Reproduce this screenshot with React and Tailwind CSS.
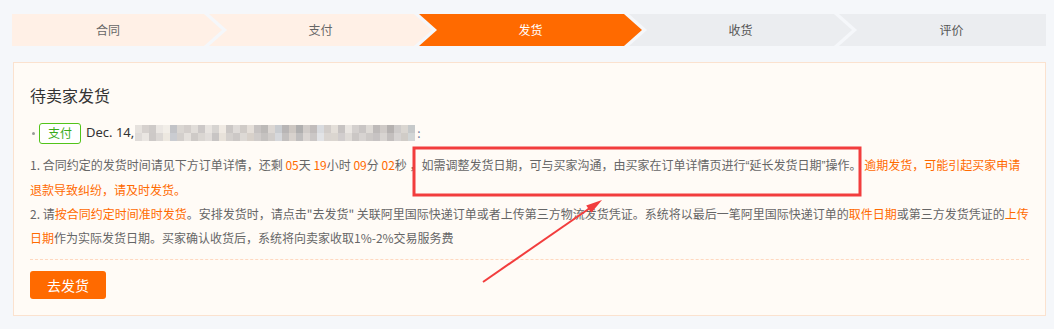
import React from "react";

const mosaicTop = [
  "bg-[#e4e0dc]","bg-[#d2cdca]","bg-[#c9c5c4]","bg-[#e9e5e1]","bg-[#f1ede7]","bg-[#bcbec3]","bg-[#d6d2cf]","bg-[#cfcac7]",
  "bg-[#dedad6]","bg-[#c7c3c2]","bg-[#e6e2de]","bg-[#d3d0ce]","bg-[#efe9e1]","bg-[#c6c2c0]","bg-[#dcd8d5]","bg-[#cbc6c3]",
  "bg-[#e3ddd6]","bg-[#c2bebd]","bg-[#b5b2b1]","bg-[#d9d4d0]","bg-[#c4c7cc]","bg-[#b1aeae]","bg-[#c8c2bd]","bg-[#a8a7a8]",
  "bg-[#cdc8c5]","bg-[#bbb6b5]","bg-[#d5d8dd]","bg-[#cec9c6]","bg-[#e2dcd6]","bg-[#c1bdbd]","bg-[#e8e4e0]","bg-[#d0ccca]",
  "bg-[#c4c0bf]","bg-[#dbd7d3]","bg-[#b7b3b3]","bg-[#cac5c2]","bg-[#ada9a9]","bg-[#c9c6c6]","bg-[#d6d2ce]","bg-[#c0c4c6]",
];
const mosaicBottom = [
  "bg-[#dcd8d5]","bg-[#e8e4e0]","bg-[#c8c4c3]","bg-[#d9d5d2]","bg-[#ece6de]","bg-[#c5c8cd]","bg-[#cfcbc8]","bg-[#e2deda]",
  "bg-[#c9c5c3]","bg-[#d6d2cf]","bg-[#dedad7]","bg-[#c3c0bf]","bg-[#e6e0d8]","bg-[#d0ccc9]","bg-[#c7c3c1]","bg-[#dad6d2]",
  "bg-[#d4cdc6]","bg-[#cbc7c6]","bg-[#bfbcbb]","bg-[#cdc9c6]","bg-[#d2d5da]","bg-[#bdbaba]","bg-[#d4cec9]","bg-[#bab8b9]",
  "bg-[#d8d3d0]","bg-[#c6c2c1]","bg-[#dfe1e5]","bg-[#d6d1ce]","bg-[#d8d2cc]","bg-[#cdc9c9]","bg-[#dcd8d4]","bg-[#c6c2c0]",
  "bg-[#d3cfcd]","bg-[#c8c4c2]","bg-[#c2bebe]","bg-[#d4d0cd]","bg-[#bdb9b9]","bg-[#d2cfcf]","bg-[#cbc7c3]","bg-[#ced2d3]",
];

function O({ children }) {
  return <span className="text-[#ff6a00]">{children}</span>;
}

function Q({ children }) {
  return <span style={{ fontFamily: '"Liberation Sans", sans-serif' }}>{children}</span>;
}

export default function App() {
  return (
    <div
      className="relative w-[1054px] h-[329px] bg-[#f5f7fa] pt-[14px] px-[12px] overflow-hidden"
      style={{ fontFamily: '"Noto Sans CJK SC", "Noto Sans", sans-serif' }}
    >
      {/* Steps */}
      <div className="flex h-[32px] w-[1034px] overflow-hidden text-[12px]">
        <div className="w-[210px] shrink-0 flex items-center justify-center pr-[18px] bg-[#fff0e6] text-[#666] [clip-path:polygon(0_0,calc(100%_-_18px)_0,100%_50%,calc(100%_-_18px)_100%,0_100%)]">
          合同
        </div>
        <div className="w-[223px] shrink-0 ml-[-13px] flex items-center justify-center px-[18px] bg-[#fff0e6] text-[#666] [clip-path:polygon(0_0,calc(100%_-_18px)_0,100%_50%,calc(100%_-_18px)_100%,0_100%,18px_50%)]">
          支付
        </div>
        <div className="w-[223px] shrink-0 ml-[-13px] flex items-center justify-center px-[18px] bg-[#ff6a00] text-white [clip-path:polygon(0_0,calc(100%_-_18px)_0,100%_50%,calc(100%_-_18px)_100%,0_100%,18px_50%)]">
          发货
        </div>
        <div className="w-[223px] shrink-0 ml-[-13px] flex items-center justify-center px-[18px] bg-[#ebedf0] text-[#555] [clip-path:polygon(0_0,calc(100%_-_18px)_0,100%_50%,calc(100%_-_18px)_100%,0_100%,18px_50%)]">
          收货
        </div>
        <div className="flex-1 ml-[-13px] flex items-center justify-center pl-[18px] bg-[#ebedf0] text-[#555] [clip-path:polygon(0_0,100%_0,100%_100%,0_100%,18px_50%)]">
          评价
        </div>
      </div>

      {/* Card */}
      <div className="mt-[16px] ml-[1px] w-[1033px] border border-[#fbe2cf] bg-[#fffbf6] px-[16px] pt-[20px] pb-[16px]">
        <div className="text-[16px] leading-[24px] text-[#333]">待卖家发货</div>

        <div className="mt-[15px] flex items-center h-[22px]">
          <span className="ml-[2px] w-[3px] h-[3px] rounded-full bg-[#999]"></span>
          <span className="ml-[4px] flex items-center justify-center w-[42px] h-[21px] rounded-[3px] border border-[#52c41a] bg-white text-[#3aaa1a] text-[12px]">
            支付
          </span>
          <span className="ml-[5px] text-[13px] text-[#333]" style={{ fontFamily: '"Noto Sans", sans-serif' }}>
            Dec. 14,
          </span>
          <span className="ml-[1px] flex flex-col blur-[0.6px] opacity-90">
            <span className="flex">
              {mosaicTop.map((c, i) => (
                <span key={i} className={`w-[7px] h-[8px] ${c}`}></span>
              ))}
            </span>
            <span className="flex">
              {mosaicBottom.map((c, i) => (
                <span key={i} className={`w-[7px] h-[8px] ${c}`}></span>
              ))}
            </span>
          </span>
          <span className="ml-[2px] text-[12px] text-[#6b7a99]">:</span>
        </div>

        <div className="mt-[9px] text-[12px] leading-[24px] text-[#666]">
          <div className="whitespace-nowrap">
            1. 合同约定的发货时间请见下方订单详情，还剩 <O>05</O>天 <O>19</O>小时 <O>09</O>分 <O>02</O>秒 ，如需调整发货日期，可与买家沟通，由买家在订单详情页进行<Q>“</Q>延长发货日期<Q>”</Q>操作。 <O>逾期发货，可能引起买家申请</O>
          </div>
          <div className="whitespace-nowrap">
            <O>退款导致纠纷，请及时发货。</O>
          </div>
          <div className="whitespace-nowrap">
            2. 请<O>按合同约定时间准时发货</O>。安排发货时，请点击"去发货" 关联阿里国际快递订单或者上传第三方物流发货凭证。系统将以最后一笔阿里国际快递订单的<O>取件日期</O>或第三方发货凭证的<O>上传</O>
          </div>
          <div className="whitespace-nowrap">
            <O>日期</O>作为实际发货日期。买家确认收货后，系统将向卖家收取1%-2%交易服务费
          </div>
        </div>

        <div className="mt-[9px] border-t border-dashed border-[#ffd8bf]"></div>

        <button className="mt-[11px] w-[76px] h-[28px] rounded-[3px] bg-[#ff6a00] text-white text-[14px] flex items-center justify-center">
          去发货
        </button>
      </div>

      {/* Annotation overlay */}
      <svg className="absolute inset-0 pointer-events-none" width="1054" height="329" viewBox="0 0 1054 329">
        <rect x="414" y="148" width="446" height="47" fill="none" stroke="#f23d3d" strokeWidth="3" />
        <line x1="483" y1="282" x2="590" y2="208" stroke="#f23d3d" strokeWidth="2" />
        <polygon points="602,200 591.4,212.8 586.2,205.4" fill="#f23d3d" />
      </svg>
    </div>
  );
}
